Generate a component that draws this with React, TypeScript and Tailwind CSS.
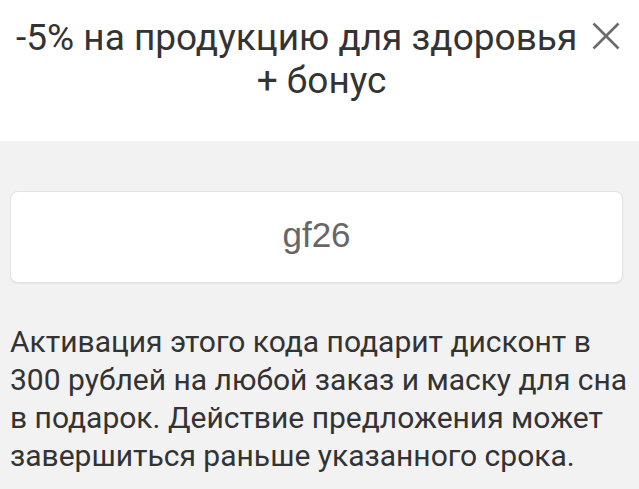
import React from "react";

export default function App() {
  return (
    <div className="w-[639px] h-[489px] bg-[#f2f2f2] overflow-hidden" style={{ fontFamily: "Roboto, sans-serif" }}>
      <div className="relative bg-white h-[141px] pt-[16px]">
        <h1 className="text-[37px] leading-[43px] text-[#333] font-normal">
          <div className="pl-[16px] whitespace-nowrap">-5% на продукцию для здоровья</div>
          <div className="text-center pl-[4px]">+ бонус</div>
        </h1>
        <button className="absolute right-[19px] top-[22px] w-[28px] h-[28px]">
          <svg viewBox="0 0 28 28" className="w-full h-full" fill="none" stroke="#6b6b6b" strokeWidth="2.6">
            <path d="M1.5 1.5 L26.5 26.5 M26.5 1.5 L1.5 26.5" />
          </svg>
        </button>
      </div>
      <div className="px-[10px] pt-[50px]">
        <div className="h-[92px] w-[613px] bg-white rounded-[8px] border border-[#e3e3e3] shadow-[0_1px_2px_rgba(0,0,0,0.06)] flex items-center justify-center">
          <span className="text-[35px] text-[#666] pb-[4px]" style={{ fontFamily: "'Liberation Sans', Arial, sans-serif" }}>gf26</span>
        </div>
        <p className="mt-[40px] text-[30px] leading-[38px] text-[#333]">
          Активация этого кода подарит дисконт в 300 рублей на любой заказ и маску для сна в подарок. Действие предложения может завершиться раньше указанного срока.
        </p>
      </div>
    </div>
  );
}
